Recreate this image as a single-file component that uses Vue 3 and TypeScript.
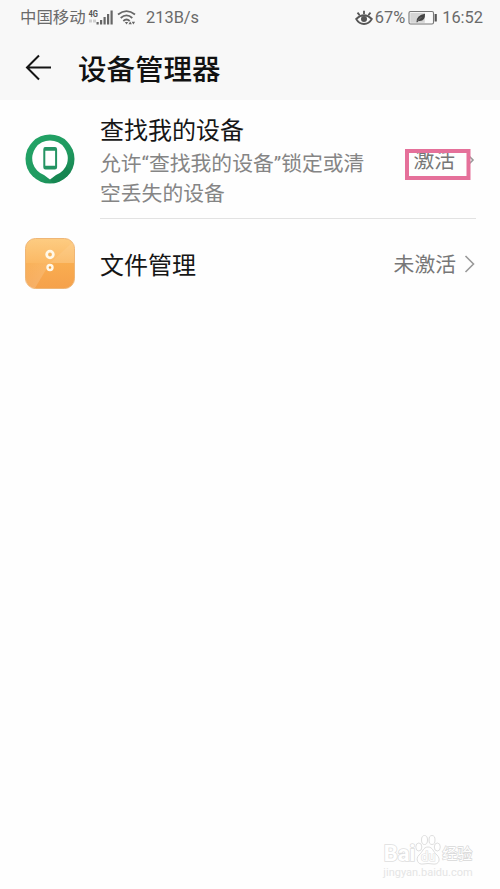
<script setup lang="ts">
const carrier = '中国移动'
const speed = '213B/s'
const battery = '67%'
const clock = '16:52'
</script>

<template>
  <main class="screen">
    <header class="top">
      <div class="status">
        <span class="carrier">{{ carrier }}</span>
        <svg class="signal" width="27" height="18" viewBox="0 0 27 18">
          <text x="0.500" y="8" font-size="9" font-weight="700" textLength="9.500" lengthAdjust="spacingAndGlyphs" fill="#555">4G</text>
          <g fill="#cfcfcf"><rect x="1" y="10.500" width="3" height="3" /><rect x="5" y="10.500" width="3" height="3" /></g>
          <g fill="#666"><rect x="8.500" y="13" width="2.200" height="2.500" /><rect x="12" y="11" width="2.200" height="4.500" /><rect x="15.500" y="8" width="2.200" height="7.500" /><rect x="19" y="5" width="2.200" height="10.500" /><rect x="22.500" y="1.500" width="2.200" height="14" /></g>
        </svg>
        <svg class="wifi" width="20" height="18" viewBox="0 0 20 18" fill="none" stroke="#666" stroke-width="1.800">
          <path d="M1 5.500Q9.500-1.200 18 5.500M3.700 9Q9.500 3.800 15.300 9M6.300 12Q9.500 8.900 12.700 12" />
          <path d="M7.800 13h3.400l-1.700 2.500z" fill="#666" stroke="none" />
          <path d="M11.500 15.300l1.700-2.700 1.700 2.700zM14.700 12.800l1.700 2.700 1.700-2.700z" fill="#666" stroke="none" />
        </svg>
        <span class="speed">{{ speed }}</span>
        <svg class="eye" width="18" height="16" viewBox="0 0 18 16" fill="none" stroke="#555" stroke-width="1.800">
          <path d="M1.200 9Q9 1.500 16.800 9Q14 14 9 14Q4 14 1.200 9zM9 4V.8M4.600 5.200L2.500 2.700M13.400 5.200l2.100-2.500" />
          <circle cx="9" cy="9" r="3" fill="#555" stroke="none" />
        </svg>
        <span class="percent">{{ battery }}</span>
        <svg class="battery" width="30" height="16" viewBox="0 0 30 16">
          <rect x="1" y="1.500" width="24.500" height="12.500" rx="1.500" fill="#fafafa" stroke="#777" stroke-width="1.100" />
          <rect x="2.300" y="2.800" width="14.500" height="10" fill="#d5d5d5" />
          <path d="M8.500 12Q8.500 5 17 3.800Q17.500 11.800 10.500 11L9 12.500z" fill="#444" />
          <path d="M9.500 11l4-4" stroke="#999" stroke-width=".5" />
          <rect x="26.600" y="4" width="2.200" height="7.500" fill="#555" />
        </svg>
        <time class="clock">{{ clock }}</time>
      </div>
      <div class="titlebar">
        <svg width="28" height="28" viewBox="0 0 28 28" fill="none" stroke="#151515" stroke-width="2">
          <path d="M27 13.500H3M15 1.500L3 13.500l12 12" />
        </svg>
        <h1>设备管理器</h1>
      </div>
    </header>

    <section class="row find">
      <svg class="icon" width="50" height="50" viewBox="0 0 50 50">
        <defs>
          <linearGradient id="green" x1="0" y1="0" x2="1" y2="1"><stop offset="0" stop-color="#23a567" /><stop offset=".6" stop-color="#209a60" /><stop offset="1" stop-color="#147d4b" /></linearGradient>
        </defs>
        <circle cx="25" cy="25" r="24.500" fill="url(#green)" />
        <path d="M30.500 40.500L25 45.500l3 3.700Q40 47 45.500 38L41 31.500Q38 38 30.500 40.500z" fill="#14824e" opacity=".6" />
        <path d="M25 45.500L19 41A17.800 17.800 0 1 1 31 41z" fill="#fff" />
        <rect x="19.300" y="14" width="11.800" height="20.500" rx="1.200" fill="#fff" stroke="#249463" stroke-width="2" />
        <path d="M19 15.200h12M19 33.300h12" stroke="#249463" stroke-width="3" />
      </svg>
      <div class="body">
        <div class="copy">
          <h2>查找我的设备</h2>
          <p>允许“查找我的设备”锁定或清<br>空丢失的设备</p>
        </div>
        <div class="state">
          <span>激活</span>
          <svg width="12" height="20" viewBox="0 0 12 20" fill="none" stroke="#999" stroke-width="1.600"><path d="M6 5l4 4-4 4" /></svg>
          <svg class="marker" width="66" height="31" viewBox="0 0 66 31">
            <rect x="2" y="2" width="61.500" height="27" fill="none" stroke="#e5709a" stroke-width="4" />
          </svg>
        </div>
      </div>
    </section>

    <section class="row files">
      <svg class="icon" width="50" height="52" viewBox="0 0 50 52">
        <defs>
          <linearGradient id="orange" x1="0" y1="0" x2="0" y2="1"><stop offset="0" stop-color="#fdcc82" /><stop offset=".48" stop-color="#fbb965" /><stop offset=".5" stop-color="#f9ad50" /><stop offset="1" stop-color="#f5a14b" /></linearGradient>
          <linearGradient id="shine" x1="0" y1="0" x2="1" y2="1"><stop offset="0" stop-color="#fff" stop-opacity=".05" /><stop offset="1" stop-color="#fff" stop-opacity=".2" /></linearGradient>
        </defs>
        <rect x=".5" y=".5" width="49" height="50" rx="10" fill="url(#orange)" stroke="#efb676" />
        <path d="M1 25H25L10 50H1z" fill="url(#shine)" />
        <path d="M25 25L49 3V25z" fill="#fff" opacity=".08" />
        <circle cx="25" cy="16.500" r="3.300" fill="#f6b45d" stroke="#fff8e8" stroke-width="2.800" />
        <circle cx="25" cy="29.500" r="2.500" fill="#f09e3c" stroke="#fff8e8" stroke-width="2.400" />
      </svg>
      <h2>文件管理</h2>
      <div class="state">
        <span>未激活</span>
        <svg width="12" height="20" viewBox="0 0 12 20" fill="none" stroke="#999" stroke-width="1.600"><path d="M1.500 1l8 8-8 8" /></svg>
      </div>
    </section>

    <footer class="brand">
      <div class="logo">
        <span class="latin">Bai</span>
        <svg width="26" height="31" viewBox="0 0 26 31" fill="#fff" stroke="#dedede">
          <ellipse cx="9.500" cy="5" rx="3" ry="4.500" /><ellipse cx="17" cy="5" rx="3" ry="4.500" />
          <ellipse cx="3.800" cy="12" rx="3" ry="4" /><ellipse cx="22.300" cy="12" rx="3" ry="4" />
          <path d="M13 12C8 12 8 17 4 20C0 24 3 30 8 29Q13 28 18 29C24 30 26 24 22 20C18 17 18 12 13 12z" />
          <text class="du" x="6" y="26" font-size="13">du</text>
        </svg>
        <span class="chinese">经验</span>
      </div>
      <span class="url">jingyan.baidu.com</span>
    </footer>
  </main>
</template>

<style>
body { margin: 0; background: #fefefe; }
</style>

<style scoped>
.screen {
  box-sizing: border-box;
  display: flex;
  flex-direction: column;
  width: 500px;
  height: 889px;
  overflow: hidden;
  background: #fefefe;
  font-family: Roboto, "Noto Sans CJK SC", sans-serif;
}
svg { display: block; flex: none; }
h1, h2, p { margin: 0; font-weight: 400; white-space: nowrap; }
.top { height: 100px; background: #f8f8f8; }
.status { display: flex; align-items: center; box-sizing: border-box; height: 35px; padding: 0 17px 0 20px; color: #6a6a6a; font-size: 16.4px; line-height: 35px; white-space: nowrap; }
.carrier { width: 68px; }
.wifi { margin-left: 2px; }
.speed { margin-left: 9px; }
.eye { margin-left: auto; }
.percent { margin-left: 2px; }
.battery { margin-left: 3px; }
.clock { margin-left: 4px; }
.titlebar { display: flex; align-items: center; height: 65px; padding-left: 24px; }
.titlebar h1 { margin-left: 26px; padding-top: 5px; color: #111; font-size: 28.5px; font-weight: 500; line-height: 65px; }
.row { display: flex; box-sizing: border-box; padding: 0 24px 0 25px; }
.find { height: 119px; }
.find .icon { margin-top: 34px; }
.body { display: flex; flex: 1; justify-content: space-between; margin-left: 25px; border-bottom: 1px solid #e2e2e2; }
h2 { color: #161616; font-size: 24px; line-height: 32px; }
.copy { padding-top: 15px; }
.copy p { margin-top: 2px; color: #858585; font-size: 20.8px; line-height: 30px; }
.state { display: flex; align-items: center; color: #777; font-size: 20.8px; line-height: 30px; white-space: nowrap; }
.state > svg:not(.marker) { margin-left: 8px; }
.find .state { position: relative; height: 30px; margin: 46px 1px 0 0; }
.marker { position: absolute; left: -8px; top: 3px; }
.files { align-items: center; height: 90px; }
.files h2 { margin-left: 25px; padding-top: 4px; }
.files .state { margin-left: auto; padding-top: 1px; }
.brand { display: flex; flex-direction: column; align-self: flex-end; align-items: center; width: 92px; margin: auto 26px 9px 0; color: #fff; }
.logo { display: flex; align-items: flex-end; height: 32px; white-space: nowrap; }
.latin { font-size: 22px; font-weight: 700; line-height: 24px; -webkit-text-stroke: 1.6px #dedede; paint-order: stroke fill; }
.du { stroke-width: 1.2; paint-order: stroke fill; }
.chinese { margin-left: 1px; font-size: 15px; line-height: 24px; -webkit-text-stroke: 1.3px #d8d8d8; paint-order: stroke fill; }
.url { color: #e5e5e5; font-size: 11px; line-height: 14px; }
</style>
